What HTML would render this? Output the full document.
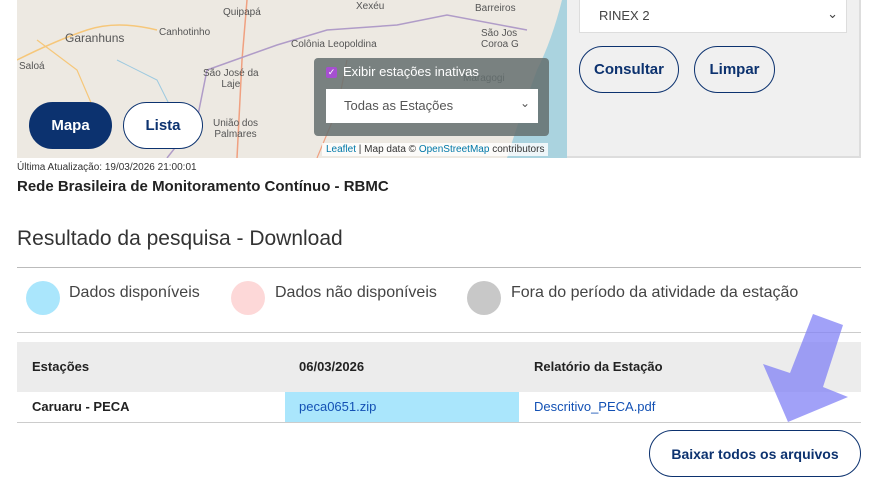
<!DOCTYPE html>
<html><head><meta charset="utf-8"><style>
*{box-sizing:border-box;margin:0;padding:0}
body{width:891px;height:491px;background:#fff;font-family:"Liberation Sans",sans-serif;position:relative;overflow:hidden;color:#222}
.abs{position:absolute}
.map{left:17px;top:0;width:550px;height:158px;background:#ede9e2;overflow:hidden}
.lbl{position:absolute;font-size:10px;color:#555}
.btn{position:absolute;border:1.5px solid #0c326f;border-radius:24px;color:#0c326f;font-weight:bold;font-size:15px;display:flex;align-items:center;justify-content:center;background:#fff}
.panel{left:567px;top:0;width:294px;height:158px;background:#f0f0f0;border-right:2px solid #ddd;border-bottom:2px solid #ddd}
</style></head><body>
<div class="abs map">
<svg width="550" height="158" style="position:absolute;left:0;top:0">
<path d="M0 60 Q40 40 70 30 T140 30" stroke="#f6c77a" stroke-width="1.5" fill="none"/>
<path d="M230 0 L225 60 L220 158" stroke="#f0a080" stroke-width="1.5" fill="none"/>
<path d="M190 70 L260 45 L310 30 L380 25 L430 15 L510 30" stroke="#b09cc8" stroke-width="1.5" fill="none"/>
<path d="M190 70 L180 120 L150 158" stroke="#b09cc8" stroke-width="1.5" fill="none"/>
<path d="M20 40 L60 70 L90 140" stroke="#f6c77a" stroke-width="1.2" fill="none"/>
<path d="M100 60 L140 80 L160 120" stroke="#9cc9e0" stroke-width="1" fill="none"/>
<path d="M330 60 L320 110 L300 158" stroke="#f0a080" stroke-width="1.2" fill="none"/>
<path d="M545 0 Q535 40 520 70 Q505 110 490 158 L550 158 L550 0Z" fill="#aad3df"/>
</svg>
<div class="lbl" style="left:206px;top:7px">Quipapá</div>
<div class="lbl" style="left:339px;top:1px">Xexéu</div>
<div class="lbl" style="left:48px;top:31px;font-size:12px">Garanhuns</div>
<div class="lbl" style="left:142px;top:27px">Canhotinho</div>
<div class="lbl" style="left:274px;top:39px">Colônia Leopoldina</div>
<div class="lbl" style="left:2px;top:61px">Saloá</div>
<div class="lbl" style="left:186px;top:68px;text-align:center">São José da<br>Laje</div>
<div class="lbl" style="left:196px;top:118px;text-align:center">União dos<br>Palmares</div>
<div class="lbl" style="left:458px;top:3px">Barreiros</div>
<div class="lbl" style="left:464px;top:28px">São Jos<br>Coroa G</div>
<div class="lbl" style="left:446px;top:73px">Maragogi</div>
<div class="abs" style="left:297px;top:58px;width:235px;height:78px;background:rgba(100,110,110,.85);border-radius:4px">
<div class="abs" style="left:12px;top:9px;width:11px;height:11px;background:#a64fd0;border-radius:2px;color:#fff;font-size:9px;line-height:11px;text-align:center">✓</div>
<div class="abs" style="left:29px;top:6px;color:#fff;font-size:13px">Exibir estações inativas</div>
<div class="abs" style="left:12px;top:31px;width:212px;height:34px;background:#fff;font-size:13px;color:#555;padding:9px 0 0 18px">Todas as Estações<span style="position:absolute;right:8px;top:7px;font-size:12px">⌄</span></div>
</div>
<div class="abs" style="left:305px;top:143px;background:rgba(255,255,255,.8);font-size:10px;padding:1px 4px;color:#333"><span style="color:#0078a8">Leaflet</span> | Map data © <span style="color:#0078a8">OpenStreetMap</span> contributors</div>
</div>
<div class="btn" style="left:29px;top:102px;width:83px;height:47px;background:#0c326f;color:#fff">Mapa</div>
<div class="btn" style="left:123px;top:102px;width:80px;height:47px">Lista</div>
<div class="abs panel">
<div class="abs" style="left:12px;top:0;width:268px;height:33px;background:#fff;border:1px solid #ddd;border-top:0;font-size:13px;color:#444;padding:8px 0 0 19px">RINEX 2<span style="position:absolute;right:8px;top:6px">⌄</span></div>
</div>
<div class="btn" style="left:579px;top:46px;width:100px;height:47px;background:transparent;font-weight:normal;font-size:15px"><b style="font-weight:600">Consultar</b></div>
<div class="btn" style="left:694px;top:46px;width:81px;height:47px;background:transparent"><span style="font-weight:600">Limpar</span></div>
<div class="abs" style="left:17px;top:162px;font-size:10px;color:#333">Última Atualização: 19/03/2026 21:00:01</div>
<div class="abs" style="left:17px;top:178px;font-size:15px;font-weight:bold;color:#222">Rede Brasileira de Monitoramento Contínuo - RBMC</div>
<div class="abs" style="left:17px;top:227px;font-size:21px;color:#333">Resultado da pesquisa - Download</div>
<div class="abs" style="left:17px;top:267px;width:844px;height:1px;background:#bbb"></div>
<div class="abs" style="left:26px;top:281px;width:34px;height:34px;border-radius:50%;background:#aae6fc"></div>
<div class="abs" style="left:69px;top:284px;font-size:16px;color:#444">Dados disponíveis</div>
<div class="abs" style="left:231px;top:281px;width:34px;height:34px;border-radius:50%;background:#fdd8d8"></div>
<div class="abs" style="left:275px;top:284px;font-size:16px;color:#444">Dados não disponíveis</div>
<div class="abs" style="left:467px;top:281px;width:34px;height:34px;border-radius:50%;background:#c8c8c8"></div>
<div class="abs" style="left:511px;top:284px;font-size:16px;color:#444">Fora do período da atividade da estação</div>
<div class="abs" style="left:17px;top:332px;width:844px;height:1px;background:#ccc"></div>
<div class="abs" style="left:17px;top:342px;width:844px;height:50px;background:#ececec"></div>
<div class="abs" style="left:32px;top:359px;font-size:13px;font-weight:bold;color:#222">Estações</div>
<div class="abs" style="left:299px;top:359px;font-size:13px;font-weight:bold;color:#222">06/03/2026</div>
<div class="abs" style="left:534px;top:359px;font-size:13px;font-weight:bold;color:#222">Relatório da Estação</div>
<div class="abs" style="left:285px;top:392px;width:234px;height:30px;background:#aae6fc"></div>
<div class="abs" style="left:32px;top:399px;font-size:13px;font-weight:bold;color:#222">Caruaru - PECA</div>
<div class="abs" style="left:299px;top:399px;font-size:13px;color:#1351b4">peca0651.zip</div>
<div class="abs" style="left:534px;top:399px;font-size:13px;color:#1351b4">Descritivo_PECA.pdf</div>
<div class="abs" style="left:17px;top:422px;width:844px;height:1px;background:#ccc"></div>
<div class="btn" style="left:649px;top:430px;width:212px;height:47px;background:transparent"><span style="font-weight:600;font-size:14px">Baixar todos os arquivos</span></div>
<svg class="abs" style="left:0;top:0" width="891" height="491"><polygon points="813,314 843,325 823,387 848,397 788,422 763,364 790,373" fill="rgba(130,130,245,.75)"/></svg>
</body></html>
